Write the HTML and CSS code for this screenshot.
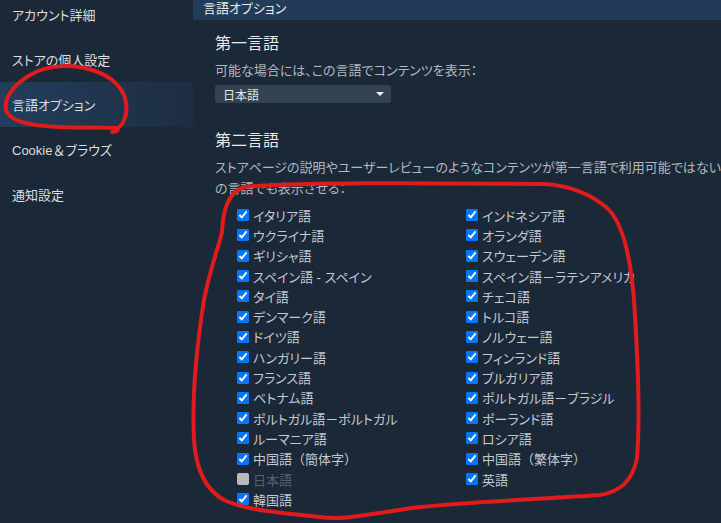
FILE: index.html
```html
<!DOCTYPE html>
<html lang="ja">
  <head>
    <meta charset="utf-8">
    <title>言語オプション</title>
    <link rel="stylesheet" href="styles.css">
  </head>
  <body>
    <div class="page">
      <nav class="side">
        <div class="side-list">
          <a class="side-item">アカウント詳細</a>
          <a class="side-item">ストアの個人設定</a>
          <a class="side-item side-item-on">言語オプション</a>
          <a class="side-item"><span>Cookie<span class="wide-char">＆</span>ブラウズ</span></a>
          <a class="side-item">通知設定</a>
        </div>
      </nav>

      <main class="main">
        <div class="main-head">言語オプション</div>
        <div class="main-body">
          <h2 class="sec-title">第一言語</h2>
          <p class="sec-desc">可能な場合には、この言語でコンテンツを表示：</p>
          <div class="select">
            <span>日本語</span>
            <span class="select-arrow"></span>
          </div>

          <h2 class="sec-title sec-title-2">第二言語</h2>
          <p class="sec-desc sec-desc-wide">ストアページの説明やユーザーレビューのようなコンテンツが第一言語で利用可能ではない場合、以下の言語でも表示させる：</p>

          <div class="lang-grid">
            <label class="lang"><input type="checkbox" checked><span>イタリア語</span></label>
            <label class="lang"><input type="checkbox" checked><span>インドネシア語</span></label>
            <label class="lang"><input type="checkbox" checked><span>ウクライナ語</span></label>
            <label class="lang"><input type="checkbox" checked><span>オランダ語</span></label>
            <label class="lang"><input type="checkbox" checked><span>ギリシャ語</span></label>
            <label class="lang"><input type="checkbox" checked><span>スウェーデン語</span></label>
            <label class="lang"><input type="checkbox" checked><span>スペイン語 - スペイン</span></label>
            <label class="lang"><input type="checkbox" checked><span>スペイン語－ラテンアメリカ</span></label>
            <label class="lang"><input type="checkbox" checked><span>タイ語</span></label>
            <label class="lang"><input type="checkbox" checked><span>チェコ語</span></label>
            <label class="lang"><input type="checkbox" checked><span>デンマーク語</span></label>
            <label class="lang"><input type="checkbox" checked><span>トルコ語</span></label>
            <label class="lang"><input type="checkbox" checked><span>ドイツ語</span></label>
            <label class="lang"><input type="checkbox" checked><span>ノルウェー語</span></label>
            <label class="lang"><input type="checkbox" checked><span>ハンガリー語</span></label>
            <label class="lang"><input type="checkbox" checked><span>フィンランド語</span></label>
            <label class="lang"><input type="checkbox" checked><span>フランス語</span></label>
            <label class="lang"><input type="checkbox" checked><span>ブルガリア語</span></label>
            <label class="lang"><input type="checkbox" checked><span>ベトナム語</span></label>
            <label class="lang"><input type="checkbox" checked><span>ポルトガル語－ブラジル</span></label>
            <label class="lang"><input type="checkbox" checked><span>ポルトガル語－ポルトガル</span></label>
            <label class="lang"><input type="checkbox" checked><span>ポーランド語</span></label>
            <label class="lang"><input type="checkbox" checked><span>ルーマニア語</span></label>
            <label class="lang"><input type="checkbox" checked><span>ロシア語</span></label>
            <label class="lang"><input type="checkbox" checked><span>中国語<span class="wide-char">（簡体字）</span></span></label>
            <label class="lang"><input type="checkbox" checked><span>中国語<span class="wide-char">（繁体字）</span></span></label>
            <label class="lang lang-off"><input type="checkbox" disabled><span>日本語</span></label>
            <label class="lang"><input type="checkbox" checked><span>英語</span></label>
            <label class="lang"><input type="checkbox" checked><span>韓国語</span></label>
          </div>
        </div>
      </main>

      <!-- hand-drawn red marks over the screenshot -->
      <svg class="marks" width="721" height="523" viewBox="0 0 721 523">
        <path d="M114 131 C122 127 128 117 126 103 C124 88 112 77 95 71 C75 64 50 64 32 74 C15 83 3 98 6 110 C9 121 30 126 60 127 C80 128 100 127 116 128 C119 129 118 132 112 132"/>
        <path d="M222 232 C223 212 227 193 244 187 C300 182 420 183 545 184 C575 186 595 198 606 207 C624 222 631 262 634 300 C638 360 640 420 637 458 C633 480 620 492 600 495 C540 499 470 502 420 507 C380 512 345 521 320 517 C280 513 245 510 224 500 C206 490 196 470 194 440 C192 400 196 350 204 300 C211 265 219 246 222 232"/>
      </svg>
    </div>
  </body>
</html>
```

FILE: styles.css
```css
html, body{
  margin: 0;
  height: 100%;
  overflow: hidden;
}

body{
  background-color: #1b2838;
  font-family: "Liberation Sans", "Noto Sans CJK JP", sans-serif;
  font-feature-settings: "palt";
  font-size: 13px;
  color: #dcdedf;
}

.wide-char{
  font-feature-settings: normal;
}

.page{
  position: relative;
  display: flex;
  width: 721px;
  height: 523px;
  overflow: hidden;
}

/* left menu */
.side{
  width: 193px;
  flex-shrink: 0;
}
.side-list{
  margin-top: -8px;
  display: flex;
  flex-direction: column;
}
.side-item{
  height: 45px;
  display: flex;
  align-items: center;
  padding-left: 12px;
  color: #dcdedf;
  font-size: 13px;
}
.side-item-on{
  background: linear-gradient(to right, #223e5c 0%, #1f3249 70%, #1d2d42 100%);
}

/* right panel */
.main{
  flex: 1;
  min-width: 0;
}
.main-head{
  height: 20px;
  line-height: 17px;
  padding-left: 10px;
  background-color: #213b58;
  color: #ecedee;
  font-size: 13px;
}
.main-body{
  padding: 12px 0 0 22px;
}
.sec-title{
  margin: 0 0 4px 0;
  font-size: 16px;
  font-weight: normal;
  line-height: 24px;
  color: #e8e9ea;
}
.sec-title-2{
  margin-top: 26px;
}
.sec-desc{
  margin: 0;
  line-height: 21px;
  color: #b2b8be;
  white-space: nowrap;
}
.sec-desc-wide{
  width: 568px;
  white-space: normal;
}

.select{
  width: 176px;
  height: 18px;
  margin-top: 4px;
  box-sizing: border-box;
  padding: 0 7px 0 8px;
  display: flex;
  align-items: center;
  justify-content: space-between;
  background-color: #32434f;
  border-radius: 3px;
  font-size: 12px;
  color: #e6e7e8;
}
.select-arrow{
  width: 0;
  height: 0;
  border-left: 4px solid transparent;
  border-right: 4px solid transparent;
  border-top: 4px solid #f0f0f0;
}

/* second language checkboxes */
.lang-grid{
  margin-top: 6px;
  padding-left: 22px;
  display: grid;
  grid-template-columns: 229px 229px;
  grid-auto-rows: 20.3px;
}
.lang{
  display: flex;
  align-items: center;
  gap: 4px;
  white-space: nowrap;
  color: #c3c9cf;
  font-size: 13px;
}
.lang input{
  width: 12px;
  height: 12px;
  margin: 0;
  flex-shrink: 0;
}
.lang-off{
  color: #56616c;
}
.lang-off input{
  appearance: none;
  background-color: #b6babd;
  border-radius: 2px;
}

.marks{
  position: absolute;
  top: 0;
  left: 0;
  pointer-events: none;
}
.marks path{
  fill: none;
  stroke: #e01b1b;
  stroke-width: 4;
  stroke-linecap: round;
  stroke-linejoin: round;
}
```
